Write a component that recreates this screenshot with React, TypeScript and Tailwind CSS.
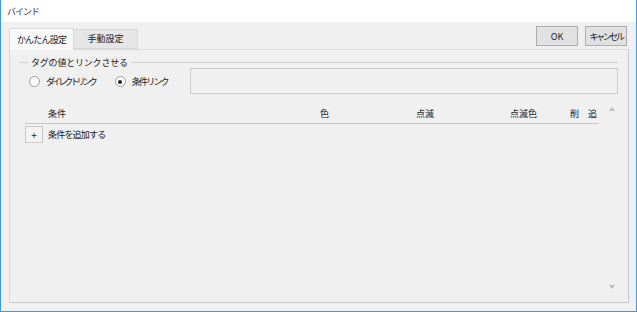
import React from "react";

const FONT = { fontFamily: '"Noto Sans CJK JP", "Liberation Sans", sans-serif' };

function Radio({ checked, label, tight }: { checked?: boolean; label: string; tight: string }) {
	return (
		<label className="flex items-center gap-[6px]">
			<span className="flex h-[11px] w-[11px] items-center justify-center rounded-full border border-[#9a9a9a] bg-white">
				{checked && <span className="h-[4px] w-[4px] rounded-full bg-[#222]" />}
			</span>
			<span className={tight}>{label}</span>
		</label>
	);
}

export default function App() {
	return (
		<div
			className="flex h-[312px] w-[637px] flex-col whitespace-nowrap border-x border-b border-[#3d98e0] text-[9px] leading-none text-[#1a1a1a]"
			style={FONT}
		>
			{/* ── Title Bar ── */}
			<div className="flex h-[22px] shrink-0 items-center bg-white pl-[6px] tracking-[-1px] text-[#333]">
				バインド
			</div>

			{/* ── Body ── */}
			<div className="flex min-h-0 flex-1 flex-col bg-[#f0f0f0] pb-[8px] pl-[8px] pr-[7px]">
				<div className="flex h-[27px] shrink-0 items-end justify-between">
					<div className="flex items-end">
						<div className="z-10 -mb-px flex h-[22px] w-[65px] items-center justify-center border border-b-0 border-[#d9d9d9] bg-[#f9f9f9] tracking-[-0.8px]">
							かんたん設定
						</div>
						<div className="flex h-[20px] w-[64px] items-center justify-center border border-l-0 border-[#d9d9d9] bg-[#e6e6e6] pb-[1px]">
							手動設定
						</div>
					</div>
					<div className="mb-[3px] mr-[2px] flex gap-[7px]">
						<button
							type="button"
							className="h-[20px] w-[42px] border border-[#adadad] bg-[#e1e1e1]"
						>
							OK
						</button>
						<button
							type="button"
							className="h-[20px] w-[42px] border border-[#adadad] bg-[#e1e1e1] tracking-[-2.4px]"
						>
							キャンセル
						</button>
					</div>
				</div>

				{/* ── Tab Panel ── */}
				<div className="flex min-h-0 flex-1 flex-col border border-[#d9d9d9] border-b-[#c9c9c9] border-r-[#c9c9c9] bg-[#f0f0f0] pl-[9px] pr-[10px] pt-[6px]">
					{/* Group header */}
					<div className="flex h-[12px] items-center">
						<span className="h-px w-[9px] bg-[#cdcdcd]" />
						<span className="px-[3px] tracking-[-0.2px]">タグの値とリンクさせる</span>
						<span className="h-px flex-1 bg-[#cdcdcd]" />
					</div>

					<div className="flex h-[26px] items-center">
						<div className="flex w-[171px] items-center gap-[20px] pl-[10px] pt-[1px]">
							<Radio label="ダイレクトリンク" tight="tracking-[-2.9px]" />
							<Radio checked label="条件リンク" tight="tracking-[-1.8px]" />
						</div>
						<div className="h-[26px] flex-1 border border-[#cccccc] bg-[#f0f0f0]" />
					</div>

					{/* Condition list */}
					<div className="mt-[12px] flex min-h-0 flex-1 pb-[5px]">
						<div className="ml-[6px] flex w-[573px] flex-col">
							<div className="flex h-[18px] items-center border-b border-[#c8c8c8] pb-[3px]">
								<span className="w-[295px] pl-[23px]">条件</span>
								<span className="w-[96px]">色</span>
								<span className="w-[94px]">点滅</span>
								<span className="w-[60px]">点滅色</span>
								<span className="w-[18px]">削</span>
								<span>追</span>
							</div>
							<div className="mt-[2px] flex items-center gap-[5px]">
								<button
									type="button"
									className="flex h-[17px] w-[18px] items-center justify-center border border-[#c8c8c8] bg-[#f3f3f3] text-[10px] text-[#222]"
								>
									+
								</button>
								<span className="tracking-[-0.8px]">条件を追加する</span>
							</div>
						</div>
						<div className="ml-[9px] flex w-[10px] flex-col items-center justify-between pb-[8px] pt-[1px]">
							<span className="h-0 w-0 border-x-[3px] border-b-[4px] border-x-transparent border-b-[#bdbdbd]" />
							<span className="h-0 w-0 border-x-[3px] border-t-[4px] border-x-transparent border-t-[#bdbdbd]" />
						</div>
					</div>
				</div>
			</div>
		</div>
	);
}
